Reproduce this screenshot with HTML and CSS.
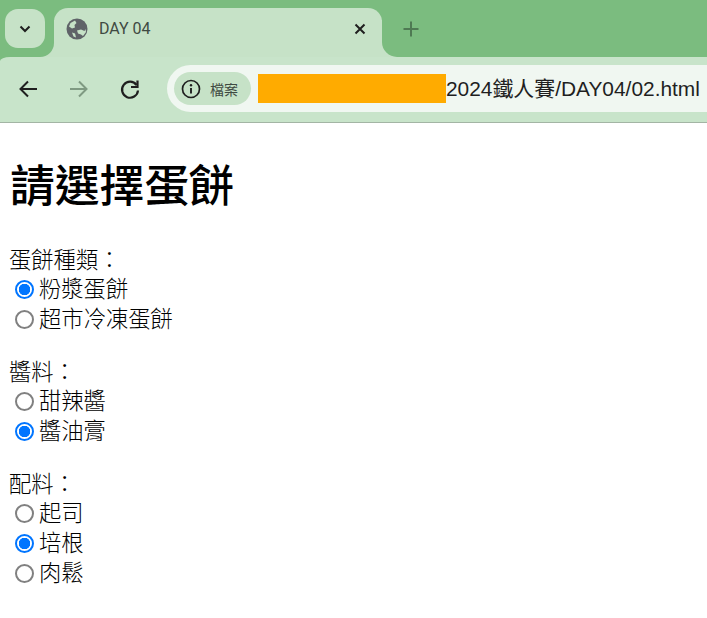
FILE: index.html
```html
<!DOCTYPE html>
<html lang="zh-Hant">
<head>
<meta charset="utf-8">
<title>DAY 04</title>
<link rel="stylesheet" href="styles.css">
</head>
<body>
<header class="chrome">
  <div class="strip">
    <div class="strip-left">
      <button class="tab-search" aria-label="tabs">
        <svg width="12" height="8" viewBox="0 0 12 8"><path d="M1.500 1.500 6 6l4.500-4.500" fill="none" stroke="#1f1f1f" stroke-width="2"/></svg>
      </button>
    </div>
    <div class="tab">
      <svg class="globe" width="22" height="22" viewBox="0 0 22 22">
        <circle cx="11" cy="11" r="10.500" fill="#5f6368"/>
        <path d="M3 8.500 4.500 5 9 2.500 10.500 5 8.500 7 9 9.500 6 10.500Z M11 12.500 15 11.500 18.500 13 19.500 11 20 14 17 18 15 16.500 12 15.500Z M6 14.500 9 15.500 10 19.500 7.500 18.500Z" fill="#c6e2c7"/>
      </svg>
      <span class="tab-title">DAY 04</span>
      <svg class="tab-close" width="12" height="12" viewBox="0 0 12 12"><path d="M1.500 1.500l9 9M10.500 1.500l-9 9" stroke="#1f1f1f" stroke-width="2"/></svg>
    </div>
    <div class="strip-right">
      <svg class="new-tab" width="16" height="16" viewBox="0 0 16 16"><path d="M8 .5v15M.5 8h15" stroke="#4f7a53" stroke-width="2"/></svg>
    </div>
  </div>
  <div class="toolbar">
    <div class="nav">
      <svg width="22" height="22" viewBox="0 0 22 22"><path d="M20 11H4M11 3.500 3.500 11l7.500 7.500" fill="none" stroke="#1f1f1f" stroke-width="2"/></svg>
      <svg width="22" height="22" viewBox="0 0 22 22"><path d="M2 11h16M11 3.500l7.500 7.500L11 18.500" fill="none" stroke="#7f9a82" stroke-width="2"/></svg>
      <svg width="22" height="22" viewBox="0 0 22 22"><path d="M17.500 7A8 8 0 1 0 19 12.500" fill="none" stroke="#1f1f1f" stroke-width="2.200"/><path d="M18.500 2.500v6.500H12" fill="none" stroke="#1f1f1f" stroke-width="2.200"/></svg>
    </div>
    <div class="omnibox">
      <div class="chip">
        <svg width="20" height="20" viewBox="0 0 20 20"><circle cx="10" cy="10" r="8.500" fill="none" stroke="#1f1f1f" stroke-width="1.700"/><path d="M10 9v5.500" stroke="#1f1f1f" stroke-width="1.900"/><circle cx="10" cy="6.300" r="1.200" fill="#1f1f1f"/></svg>
        <span class="chip-text">檔案</span>
      </div>
      <span class="redact"></span><span class="url">2024鐵人賽/DAY04/02.html</span>
    </div>
  </div>
</header>
<main class="page">
  <h1 class="title">請選擇蛋餅</h1>
  <form>
    <fieldset class="group">
      <div class="legend">蛋餅種類：</div>
      <label class="option"><input class="radio" type="radio" name="kind" checked>粉漿蛋餅</label>
      <label class="option"><input class="radio" type="radio" name="kind">超市冷凍蛋餅</label>
    </fieldset>
    <fieldset class="group">
      <div class="legend">醬料：</div>
      <label class="option"><input class="radio" type="radio" name="sauce">甜辣醬</label>
      <label class="option"><input class="radio" type="radio" name="sauce" checked>醬油膏</label>
    </fieldset>
    <fieldset class="group">
      <div class="legend">配料：</div>
      <label class="option"><input class="radio" type="radio" name="top">起司</label>
      <label class="option"><input class="radio" type="radio" name="top" checked>培根</label>
      <label class="option"><input class="radio" type="radio" name="top">肉鬆</label>
    </fieldset>
  </form>
</main>
</body>
</html>
```
FILE: styles.css
```css
* { box-sizing: border-box; }
html, body { margin: 0; padding: 0; background: #fff; }
body {
  width: 707px;
  height: 618px;
  overflow: hidden;
  font-family: "Liberation Sans", "Noto Sans CJK TC", sans-serif;
  color: #000;
}
.chrome { background: #7bbc7f; }
.strip {
  display: flex;
  height: 57px;
  background: linear-gradient(#7bbc7f 0 20px, #c6e2c7 20px);
}
.strip-left {
  width: 54px;
  background: #7bbc7f;
  border-bottom-right-radius: 14px;
  padding: 9px 0 0 5px;
}
.tab-search {
  display: flex;
  align-items: center;
  justify-content: center;
  width: 40px;
  height: 39px;
  border: 0;
  padding: 0;
  border-radius: 13px;
  background: #c6e2c7;
}
.tab {
  width: 328px;
  margin-top: 8px;
  background: #c6e2c7;
  border-radius: 14px 14px 0 0;
  display: flex;
  align-items: flex-start;
  padding: 10px 15px 0 12px;
}
.globe { flex: none; }
.tab-title {
  margin-left: 11px;
  font-family: "Roboto", sans-serif;
  font-size: 16px;
  line-height: 22px;
  color: #3f4a42;
  flex: 1;
}
.tab-close { margin-top: 5px; margin-right: 1px; }
.strip-right {
  flex: 1;
  background: #7bbc7f;
  border-bottom-left-radius: 15px;
  padding: 21px 0 0 21px;
}
.new-tab { display: block; }
.toolbar {
  height: 66px;
  background: #c8e4ca;
  border-top-left-radius: 10px 4px;
  border-bottom: 1px solid #a3b5a4;
  display: flex;
  align-items: flex-start;
  padding: 8px 0 0 17px;
}
.nav {
  display: flex;
  gap: 29px;
  padding-top: 13px;
  width: 150px;
  flex: none;
}
.omnibox {
  flex: 1;
  height: 47px;
  background: #f0f7f1;
  border-radius: 24px 0 0 24px;
  display: flex;
  align-items: center;
  padding-left: 7px;
  white-space: nowrap;
}
.chip {
  display: flex;
  align-items: center;
  width: 77px;
  height: 33px;
  border-radius: 17px;
  background: #c6e2c7;
  padding-left: 7px;
  gap: 9px;
  flex: none;
}
.chip-text { font-size: 14px; color: #3f4a42; }
.redact {
  width: 188px;
  height: 29px;
  background: #ffab00;
  margin-left: 7px;
  flex: none;
}
.url { font-size: 20.900px; line-height: 29px; color: #1f1f1f; }
.page { padding: 0 10px; }
.title {
  margin: 34px 0 0;
  font-size: 44.800px;
  line-height: 58px;
  font-weight: 500;
}
.group {
  border: 0;
  margin: 30px 0 0;
  padding: 0;
}
.group + .group { margin-top: 22px; }
.legend, .option {
  font-size: 22.300px;
  line-height: 30px;
  height: 30px;
  font-weight: 300;
}
.legend { padding-top: 1px; margin-left: -1px; }
.option { display: flex; align-items: center; }
.radio {
  appearance: none;
  width: 19px;
  height: 19px;
  margin: 0 5px 2px 5px;
  flex: none;
  border: 2px solid #808080;
  border-radius: 50%;
  background: #fff;
}
.radio:checked {
  border-color: #0075ff;
  background: radial-gradient(circle, #0075ff 0 5.500px, #fff 6px);
}
```
